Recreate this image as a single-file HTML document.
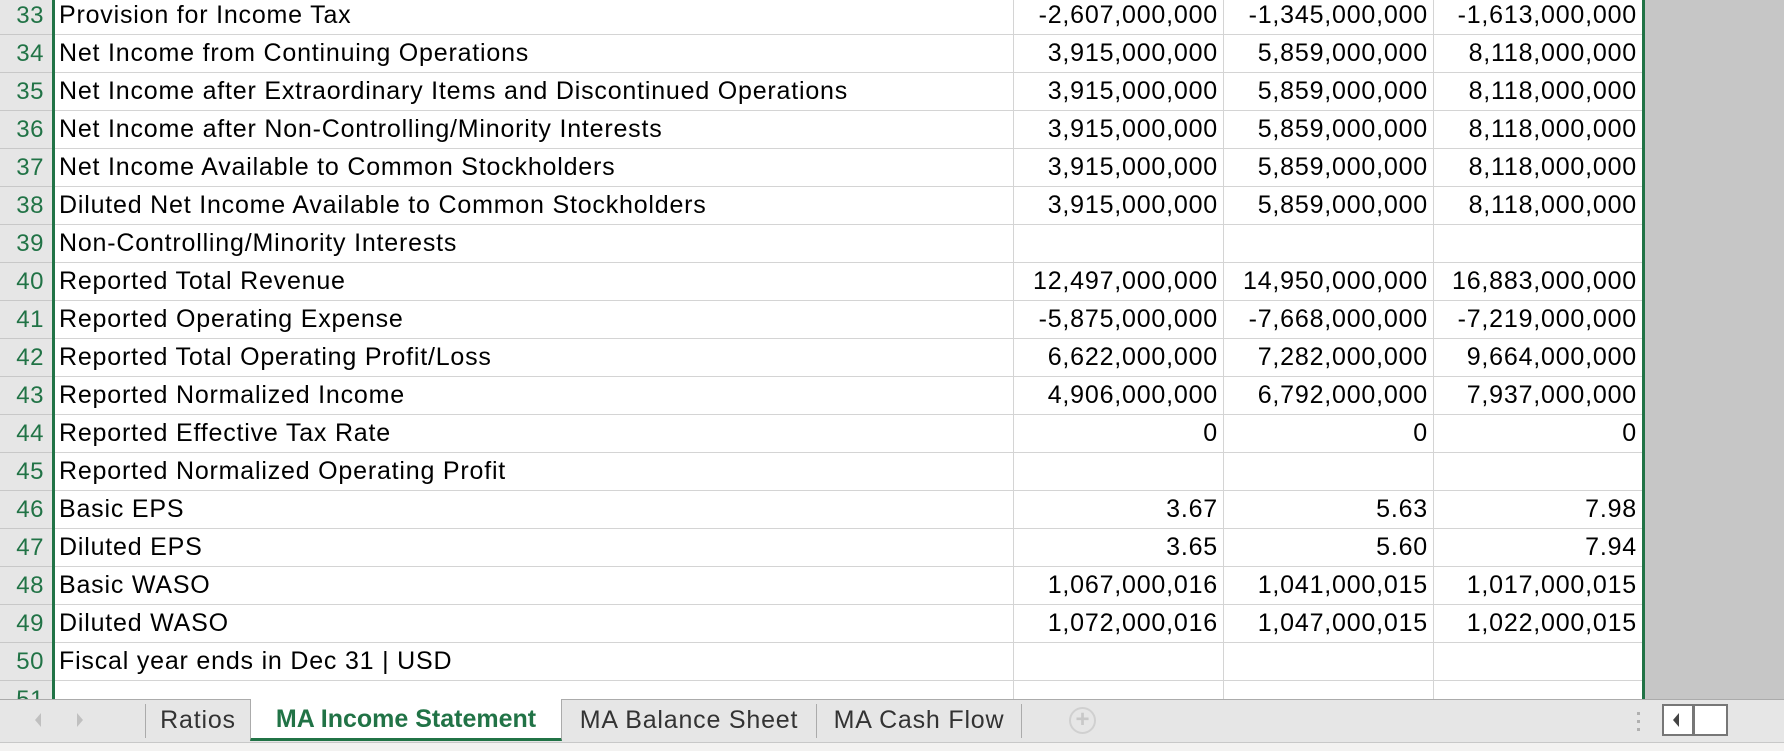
<!DOCTYPE html>
<html><head><style>
body{margin:0;width:1784px;height:751px;overflow:hidden;background:#fff;font-family:"Liberation Sans",Arial,sans-serif;position:relative}
.row{position:absolute;left:0;width:1642px;height:38px;border-bottom:1px solid #d4d4d4;box-sizing:border-box}
.rh{position:absolute;left:0;top:0;width:52px;height:38px;background:#e6e6e6;color:#217346;font-size:24px;line-height:37px;text-align:right;padding-right:8px;box-sizing:border-box;border-bottom:1px solid #c8c8c8;letter-spacing:0.5px}
.lb{position:absolute;left:59px;top:0;font-size:25px;line-height:37px;color:#000;white-space:nowrap;letter-spacing:0.8px}
.n{position:absolute;top:0;font-size:25px;line-height:37px;color:#000;text-align:right;white-space:nowrap;letter-spacing:0.8px}
.c1{right:424px}.c2{right:214px}.c3{right:5px}
.vl{position:absolute;top:0;width:1px;height:699px;background:#d4d4d4}
.tab{position:absolute;top:0;height:42px;font-size:25px;line-height:40px;text-align:center;color:#333;letter-spacing:0.8px;white-space:nowrap}
</style></head><body>
<div class="vl" style="left:1013px"></div>
<div class="vl" style="left:1223px"></div>
<div class="vl" style="left:1433px"></div>
<div style="position:absolute;left:1642px;top:0;width:142px;height:699px;background:#c6c6c6"></div>
<div style="position:absolute;left:1642px;top:0;width:3px;height:699px;background:#217346;z-index:3"></div>
<div style="position:absolute;left:52px;top:0;width:3px;height:699px;background:#217346;z-index:3"></div>
<div id="rows"></div>
<script>
var d=[["33","Provision for Income Tax","-2,607,000,000","-1,345,000,000","-1,613,000,000"],
["34","Net Income from Continuing Operations","3,915,000,000","5,859,000,000","8,118,000,000"],
["35","Net Income after Extraordinary Items and Discontinued Operations","3,915,000,000","5,859,000,000","8,118,000,000"],
["36","Net Income after Non-Controlling/Minority Interests","3,915,000,000","5,859,000,000","8,118,000,000"],
["37","Net Income Available to Common Stockholders","3,915,000,000","5,859,000,000","8,118,000,000"],
["38","Diluted Net Income Available to Common Stockholders","3,915,000,000","5,859,000,000","8,118,000,000"],
["39","Non-Controlling/Minority Interests","","",""],
["40","Reported Total Revenue","12,497,000,000","14,950,000,000","16,883,000,000"],
["41","Reported Operating Expense","-5,875,000,000","-7,668,000,000","-7,219,000,000"],
["42","Reported Total Operating Profit/Loss","6,622,000,000","7,282,000,000","9,664,000,000"],
["43","Reported Normalized Income","4,906,000,000","6,792,000,000","7,937,000,000"],
["44","Reported Effective Tax Rate","0","0","0"],
["45","Reported Normalized Operating Profit","","",""],
["46","Basic EPS","3.67","5.63","7.98"],
["47","Diluted EPS","3.65","5.60","7.94"],
["48","Basic WASO","1,067,000,016","1,041,000,015","1,017,000,015"],
["49","Diluted WASO","1,072,000,016","1,047,000,015","1,022,000,015"],
["50","Fiscal year ends in Dec 31 | USD","","",""],
["51","","","",""]];
var h="";
d.forEach(function(r,i){var t=-3+i*38;
h+='<div class="row" style="top:'+t+'px"><div class="rh">'+r[0]+'</div><div class="lb">'+r[1]+'</div><div class="n c1">'+r[2]+'</div><div class="n c2">'+r[3]+'</div><div class="n c3">'+r[4]+'</div></div>';});
document.getElementById("rows").innerHTML=h;
</script>
<div style="position:absolute;left:0;top:699px;width:1784px;height:43px;background:#e6e6e6;border-top:1px solid #ababab;box-sizing:border-box;z-index:5">
<div style="position:absolute;left:35px;top:13px;width:0;height:0;border-top:7px solid transparent;border-bottom:7px solid transparent;border-right:6px solid #c0c0c0"></div>
<div style="position:absolute;left:77px;top:13px;width:0;height:0;border-top:7px solid transparent;border-bottom:7px solid transparent;border-left:6px solid #c0c0c0"></div>
<div style="position:absolute;left:145px;top:4px;width:1px;height:34px;background:#ababab"></div>
<div class="tab" style="left:146px;width:104px">Ratios</div>
<div class="tab" style="left:250px;top:-1px;width:312px;background:#fff;border-left:1px solid #ababab;border-right:1px solid #ababab;border-bottom:3px solid #217346;box-sizing:border-box;font-weight:bold;color:#217346;letter-spacing:0px">MA Income Statement</div>
<div class="tab" style="left:562px;width:254px">MA Balance Sheet</div>
<div style="position:absolute;left:816px;top:4px;width:1px;height:34px;background:#ababab"></div>
<div class="tab" style="left:817px;width:204px">MA Cash Flow</div>
<div style="position:absolute;left:1021px;top:4px;width:1px;height:34px;background:#ababab"></div>
<div style="position:absolute;left:1069px;top:7px;width:27px;height:27px;border:2px solid #d0d0d0;border-radius:50%;box-sizing:border-box;color:#c8c8c8;font-size:24px;line-height:22px;text-align:center;font-weight:bold">+</div>
<div style="position:absolute;left:1637px;top:12px;width:3px;height:3px;background:#b0b0b0;box-shadow:0 8px 0 #b0b0b0,0 16px 0 #b0b0b0"></div>
<div style="position:absolute;left:1662px;top:4px;width:66px;height:32px;background:#fff;border:2px solid #777;box-sizing:border-box"></div>
<div style="position:absolute;left:1692px;top:4px;width:3px;height:32px;background:#777"></div>
<div style="position:absolute;left:1673px;top:13px;width:0;height:0;border-top:7px solid transparent;border-bottom:7px solid transparent;border-right:6px solid #444"></div>
</div>
<div style="position:absolute;left:0;top:742px;width:1784px;height:9px;background:#f3f2f1;border-top:1px solid #c8c8c8;box-sizing:border-box"></div>
</body></html>
